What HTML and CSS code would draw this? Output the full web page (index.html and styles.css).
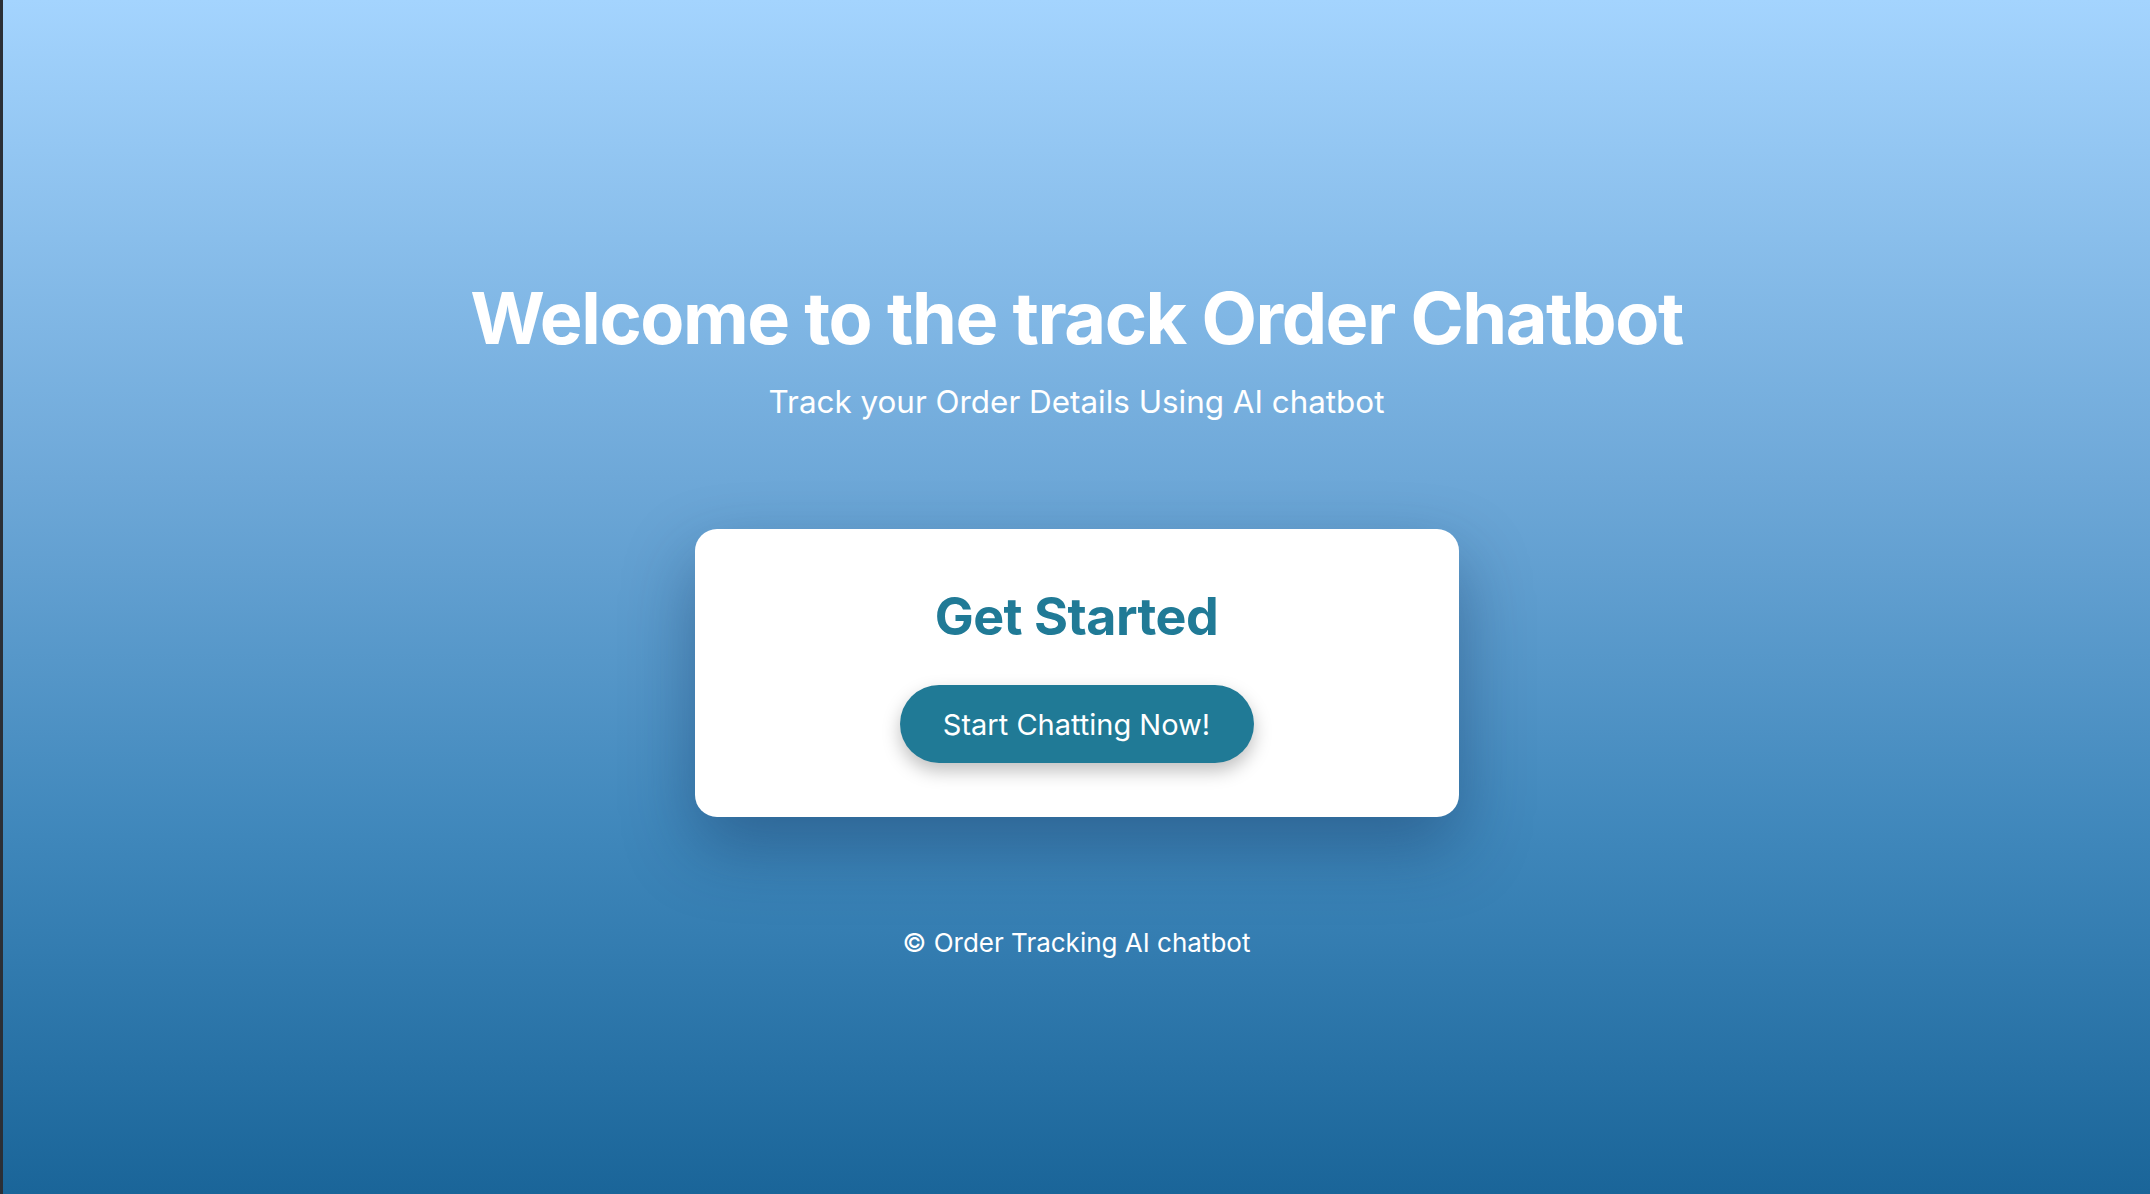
FILE: index.html
```html
<!DOCTYPE html>
<html lang="en">
<head>
<meta charset="utf-8">
<title>Track Order Chatbot</title>
<link rel="stylesheet" href="styles.css">
</head>
<body>
<main class="page">
  <header class="hero">
    <h1 class="hero-title">Welcome to the track Order Chatbot</h1>
    <p class="hero-subtitle">Track your Order Details Using AI chatbot</p>
  </header>
  <section class="card">
    <h2 class="card-title">Get Started</h2>
    <button class="cta" type="button">Start Chatting Now!</button>
  </section>
  <footer class="footer">© Order Tracking AI chatbot</footer>
</main>
</body>
</html>
```
FILE: styles.css
```css
html, body {
  margin: 0;
  padding: 0;
  height: 100%;
}

body {
  font-family: "Inter", "Noto Sans", sans-serif;
  background: linear-gradient(to bottom, #a4d4fe 0%, #6ea8d8 40%, #3f87bb 70%, #1a6599 100%);
  border-left: 3px solid #2b2f36;
  box-sizing: border-box;
  color: #ffffff;
}

.page {
  display: flex;
  flex-direction: column;
  align-items: center;
  min-height: 100vh;
}

.hero {
  display: flex;
  flex-direction: column;
  align-items: center;
  padding-top: 275px;
}

.hero-title {
  margin: 0;
  font-size: 72px;
  font-weight: 700;
  line-height: 1.2;
  letter-spacing: -0.02em;
}

.hero-subtitle {
  margin: 23px 0 0;
  font-size: 31.4px;
  font-weight: 400;
  line-height: 1.2;
}

.card {
  margin-top: 107px;
  width: 764px;
  height: 288px;
  box-sizing: border-box;
  background: #ffffff;
  border-radius: 22px;
  box-shadow: 0 30px 70px rgba(15, 45, 85, 0.4);
  display: flex;
  flex-direction: column;
  align-items: center;
  padding-top: 57px;
}

.card-title {
  margin: 0;
  font-size: 52px;
  font-weight: 700;
  line-height: 1.2;
  color: #207a96;
  letter-spacing: -0.01em;
}

.cta {
  margin-top: 37px;
  height: 78px;
  width: 354px;
  border: none;
  border-radius: 39px;
  background: #207a96;
  color: #ffffff;
  font-family: "Inter", "Noto Sans", sans-serif;
  font-size: 29px;
  font-weight: 400;
  box-shadow: 0 8px 18px rgba(0, 0, 0, 0.25);
  cursor: pointer;
}

.footer {
  margin-top: 110px;
  font-size: 26px;
  line-height: 1.2;
}
```
